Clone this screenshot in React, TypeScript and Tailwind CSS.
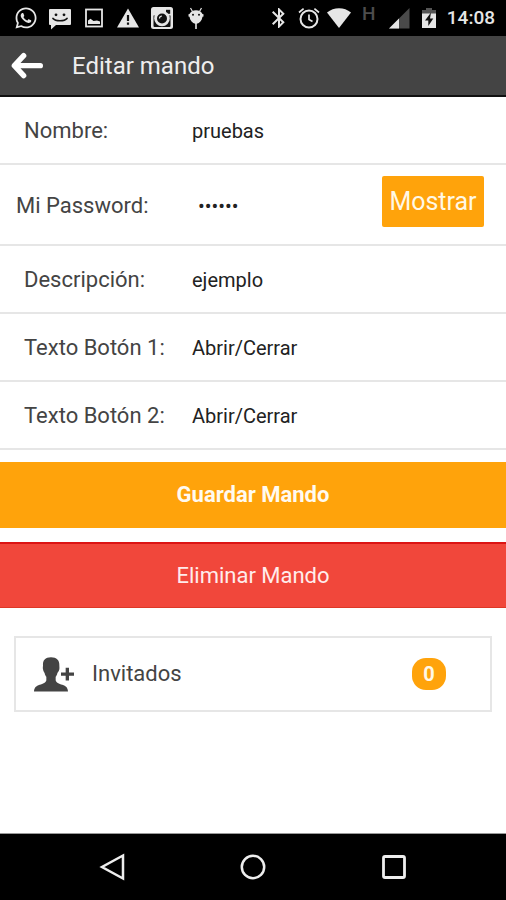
import React, { useState } from 'react';
import { FaWhatsapp } from 'react-icons/fa';
import { MdBluetooth } from 'react-icons/md';

function StatusBar() {
  return (
    <div className="flex h-9 items-center justify-between bg-black pl-[14px] pr-[11px] text-[#e6e6e6]">
      <div className="flex items-center gap-[10px]">
        <FaWhatsapp className="h-6 w-6" />
        <svg viewBox="0 0 24 24" className="h-6 w-6">
          <path fill="currentColor" d="M2 3h20a1 1 0 0 1 1 1v14a1 1 0 0 1-1 1H8l-5 4.500v-4.500H2a1 1 0 0 1-1-1V4a1 1 0 0 1 1-1z" />
          <path fill="none" stroke="#111" strokeWidth="1.7" strokeLinecap="round" d="M5 12.500c2.500 3 11.500 3 14 0" />
          <circle cx="8" cy="8.800" r="1.400" fill="#111" />
          <circle cx="16" cy="8.800" r="1.400" fill="#111" />
        </svg>
        <svg viewBox="0 0 24 24" className="h-6 w-6">
          <rect x="4" y="3.500" width="16" height="17" fill="none" stroke="currentColor" strokeWidth="1.800" />
          <path fill="currentColor" d="M6 18v-3.500l2.500-1.700 3 2.200 3.500-.5 3 1V18z" />
        </svg>
        <svg viewBox="0 0 24 24" className="h-6 w-6">
          <path fill="currentColor" d="M12 2.500 23 21.500H1z" />
          <path fill="#111" d="M10.900 9h2.200v6h-2.200zM10.900 16.500h2.200v2.200h-2.200z" />
        </svg>
        <svg viewBox="0 0 24 24" className="h-6 w-6">
          <rect x="1" y="1" width="22" height="22" rx="2.500" fill="currentColor" />
          <path fill="#111" d="M3.500 9.500h3.200a6.500 6.500 0 1 0 10.600 0h3.200V20a1 1 0 0 1-1 1h-15a1 1 0 0 1-1-1z" />
          <rect x="16" y="3.800" width="4.200" height="4" fill="#111" />
          <circle cx="12" cy="12.500" r="7.800" fill="currentColor" />
          <circle cx="12" cy="12.500" r="5" fill="#111" />
          <path fill="none" stroke="currentColor" strokeWidth="1.200" d="M9.500 12.500a2.500 2.500 0 0 1 2.500-2.500" />
        </svg>
        <svg viewBox="0 0 24 24" className="h-6 w-6">
          <path fill="currentColor" d="M5.500 8c1-2.500 3.500-3.800 6.500-3.800S17.500 5.500 18.500 8l1 .2v2.300l-1 .3c-.6 4-3 6.400-5.700 6.900V23h-1.600v-5.300c-2.700-.5-5.100-2.900-5.700-6.900l-1-.3V8.200z" />
          <path stroke="currentColor" strokeWidth="1.200" d="M8.500 5.500 6.500 2M15.500 5.500l2-3.500" />
          <circle cx="9" cy="8.800" r="1" fill="#111" />
          <circle cx="15" cy="8.800" r="1" fill="#111" />
        </svg>
      </div>
      <div className="flex h-full items-center gap-[6px]">
        <MdBluetooth className="h-6 w-6" />
        <svg viewBox="0 0 24 24" className="h-6 w-6" fill="none" stroke="currentColor">
          <circle cx="12" cy="13" r="8.500" strokeWidth="2" />
          <path strokeWidth="1.700" d="M12 8.500v5l3.500 2M2 6.500l4.600-3.900M22 6.500l-4.600-3.900" />
        </svg>
        <svg viewBox="0 0 24 24" className="h-6 w-6">
          <path fill="currentColor" d="M0 6.500C3.500 3.800 7.500 2.300 12 2.300s8.500 1.500 12 4.200L12 22z" />
        </svg>
        <span className="w-6 self-start pt-1 text-center text-[19px] leading-5 font-medium text-[#4d4d4d]">H</span>
        <svg viewBox="0 0 24 24" className="h-6 w-6">
          <path fill="#4a4a4a" d="M22.500 2v20.500H2z" />
          <path fill="currentColor" d="M12 12.500v10H2z" />
        </svg>
        <svg viewBox="0 0 24 24" className="h-6 w-6">
          <path fill="#555" d="M9 2h6v2h4v4H5V4h4z" />
          <path fill="currentColor" d="M5 7.500h14V22H5z" />
          <path fill="#111" d="M14 6.500 8 14.500h3.300V20l5-7.500h-3.300z" />
        </svg>
        <span className="text-[19px] leading-6 font-medium">14:08</span>
      </div>
    </div>
  );
}

function Header() {
  return (
    <header className="flex h-[61px] items-center gap-7 border-b-2 border-[#111] bg-[#444] px-[11px]">
      <button type="button" aria-label="Volver" className="text-white">
        <svg viewBox="0 0 99 81" className="h-[27px] w-[33px]" fill="none" stroke="currentColor" strokeWidth="16" strokeLinecap="round" strokeLinejoin="round">
          <path d="M88 41H14M38 11 10 41l28 30" />
        </svg>
      </button>
      <h1 className="text-2xl leading-8 text-[#eee]">Editar mando</h1>
    </header>
  );
}

function Field({ id, label, value }: { id: string; label: string; value: string }) {
  return (
    <div className="flex h-[68px] items-center border-b-2 border-[#e6e6e6] pt-0.5 pl-6">
      <label htmlFor={id} className="w-42 shrink-0 text-[22px] leading-7 text-[#444]">
        {label}
      </label>
      <input id={id} defaultValue={value} className="min-w-0 flex-1 bg-transparent text-xl leading-7 text-[#222] outline-none" />
    </div>
  );
}

export default function App() {
  const [visible, setVisible] = useState(false);

  return (
    <div className="flex min-h-screen flex-col bg-white font-['Roboto',sans-serif]">
      <StatusBar />
      <Header />

      <main className="flex-1">
        <form onSubmit={(e) => e.preventDefault()}>
          <Field id="nombre" label="Nombre:" value="pruebas" />
          <div className="flex h-[81px] items-center border-b-2 border-[#e6e6e6] pt-0.5 pl-4 pr-[22px]">
            <label htmlFor="password" className="w-[182px] shrink-0 text-[22px] leading-7 text-[#444]">
              Mi Password:
            </label>
            <input
              id="password"
              type={visible ? 'text' : 'password'}
              defaultValue="prueba"
              className="min-w-0 flex-1 bg-transparent text-xl leading-7 text-[#222] outline-none"
            />
            <button
              type="button"
              onClick={() => setVisible(!visible)}
              className="mt-[9px] h-[51px] w-[102px] self-start rounded-xs bg-[#ffa30b] text-[25px] leading-8 text-[#fff8e6]"
            >
              Mostrar
            </button>
          </div>
          <Field id="descripcion" label="Descripción:" value="ejemplo" />
          <Field id="boton1" label="Texto Botón 1:" value="Abrir/Cerrar" />
          <Field id="boton2" label="Texto Botón 2:" value="Abrir/Cerrar" />

          <button type="submit" className="mt-3 block h-[66px] w-full bg-[#ffa30b] text-[22px] leading-7 font-bold text-[#fffaf0]">
            Guardar Mando
          </button>
          <button type="button" className="mt-[14px] block h-[66px] w-full border-t-2 border-b border-t-[#dc1414] border-b-[#dd3826] bg-[#f1473b] text-[22px] leading-7 text-[#ffeceb]">
            Eliminar Mando
          </button>
        </form>

        {/* Guests */}
        <a href="#invitados" className="mx-[14px] mt-7 flex h-[76px] items-center border-2 border-[#e6e6e6] pl-[18px] pr-11">
          <svg viewBox="0 0 120 104" className="h-[35px] w-10" fill="#444">
            <path d="M51 0c17 0 26 9 25 24 0 5 1 7 0 12-1 6-4 7-6 12-1 5-3 8-5 11v10c1 7 10 10 20 14 11 4 16 8 17 20H0c1-12 6-16 17-20 10-4 19-7 20-14V59c-2-3-4-6-5-11-2-5-4-6-5-12-1-5 0-7 0-12C26 9 34 0 51 0z" />
            <path d="M95 32h10v14h15v10h-15v14H95V56H81V46h14z" />
          </svg>
          <span className="ml-[18px] flex-1 text-[22px] leading-7 text-[#444]">Invitados</span>
          <span className="flex h-8 w-[34px] items-center justify-center rounded-[14px] bg-[#ffa30b] text-xl leading-7 font-bold text-[#fff8e6]">0</span>
        </a>
      </main>

      <nav className="flex h-[67px] items-center justify-center gap-[113px] border-t border-[#999] bg-black text-[#eee]">
        <button type="button" aria-label="Atrás">
          <svg viewBox="0 0 28 28" className="h-7 w-7" fill="none" stroke="currentColor" strokeWidth="2.500">
            <path d="M25 2.500v23L4 14z" />
          </svg>
        </button>
        <button type="button" aria-label="Inicio">
          <svg viewBox="0 0 28 28" className="h-7 w-7" fill="none" stroke="currentColor" strokeWidth="2.500">
            <circle cx="14" cy="14" r="11.200" />
          </svg>
        </button>
        <button type="button" aria-label="Recientes">
          <svg viewBox="0 0 28 28" className="h-7 w-7" fill="none" stroke="currentColor" strokeWidth="2.800">
            <rect x="3.500" y="3.500" width="21" height="21" rx="1.500" />
          </svg>
        </button>
      </nav>
    </div>
  );
}
